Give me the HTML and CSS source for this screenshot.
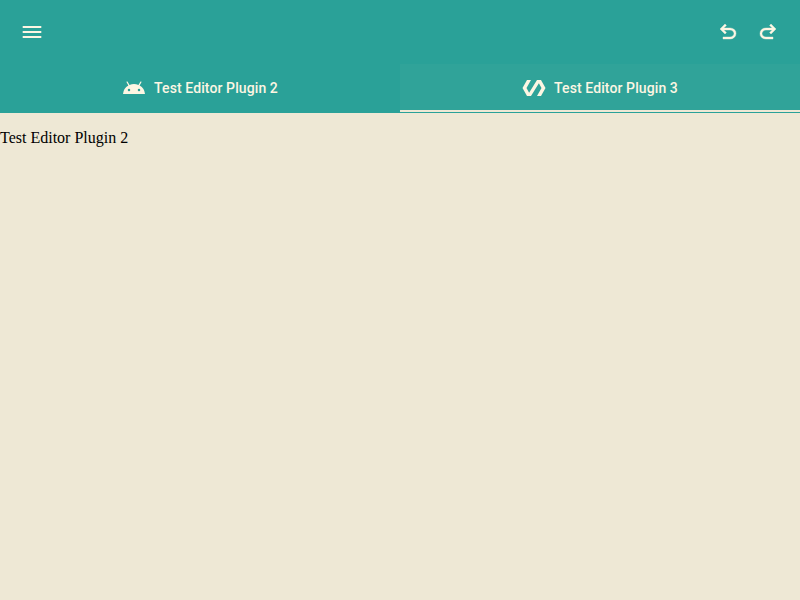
FILE: index.html
```html
<!DOCTYPE html>
<html lang="en">
<head>
<meta charset="utf-8">
<title>Editor</title>
<link rel="stylesheet" href="styles.css">
</head>
<body>
<header class="header">
  <div class="toolbar">
    <button class="icon-button" aria-label="Menu"><svg class="icon" viewBox="0 0 24 24"><path d="M2.700 18h18.600v-2H2.700v2zm0-5h18.600v-2H2.700v2zm0-7v2h18.600V6H2.700z"/></svg></button>
    <div class="actions">
      <button class="icon-button" aria-label="Undo"><svg class="icon icon-bold" viewBox="0 -960 960 960"><path d="M280-200v-80h284q63 0 109.500-40T720-420q0-60-46.500-100T564-560H312l104 104-56 56-200-200 200-200 56 56-104 104h252q97 0 169.500 63T800-420q0 94-72.500 157T564-200H280Z"/></svg></button>
      <button class="icon-button" aria-label="Redo"><svg class="icon icon-bold" viewBox="0 -960 960 960"><path d="M396-200q-97 0-169.500-63T160-420q0-94 66.500-157T396-640h252L544-744l56-56 200 200-200 200-56-56 104-104H396q-63 0-109.500 40T240-420q0 60 46.500 100T396-280h284v80H396Z"/></svg></button>
    </div>
  </div>
  <nav class="tabs">
    <button class="tab"><svg class="icon" viewBox="0 0 24 24"><path d="M17.600 9.480l1.840-3.180c.16-.31.04-.69-.26-.85-.29-.15-.65-.06-.83.22l-1.880 3.240a11.460 11.460 0 0 0-8.940 0L5.650 5.670c-.19-.29-.58-.38-.87-.2-.28.18-.37.54-.22.83L6.400 9.480A10.780 10.780 0 0 0 1 18h22a10.780 10.780 0 0 0-5.400-8.520zM7 15.250a1.250 1.250 0 1 1 0-2.500 1.250 1.250 0 0 1 0 2.500zm10 0a1.250 1.250 0 1 1 0-2.500 1.250 1.250 0 0 1 0 2.500z"/></svg><span>Test Editor Plugin 2</span></button>
    <button class="tab tab-selected"><svg class="icon" viewBox="0 0 24 24"><path d="M19 4h-4L7.110 16.630 4.500 12 9 4H5L.5 12 5 20h4l7.890-12.630L19.500 12 15 20h4l4.500-8z"/></svg><span>Test Editor Plugin 3</span></button>
  </nav>
</header>
<main><p>Test Editor Plugin 2</p></main>
</body>
</html>
```
FILE: styles.css
```css
html, body {
  height: 100%;
}

body {
  margin: 0;
  background: #eee8d5;
  color: #000;
  font-family: "Liberation Serif", serif;
  font-size: 16px;
  overflow: hidden;
}

.header {
  height: 113px;
  background: #2aa198;
  color: #fdf6e3;
}

.toolbar {
  display: flex;
  align-items: center;
  justify-content: space-between;
  height: 64px;
  padding: 0 12px;
  box-sizing: border-box;
}

.actions {
  display: flex;
}

button {
  display: flex;
  align-items: center;
  justify-content: center;
  margin: 0;
  padding: 0;
  border: 0;
  background: none;
  color: inherit;
}

.icon-button {
  width: 40px;
  height: 40px;
}

.icon {
  display: block;
  width: 24px;
  height: 24px;
  fill: currentColor;
}

.icon-bold {
  stroke: currentColor;
  stroke-width: 16;
}

.tabs {
  display: grid;
  grid-template-columns: 1fr 1fr;
  height: 48px;
}

.tab {
  gap: 8px;
  font: 500 14px/20px Roboto, sans-serif;
  letter-spacing: 0.1px;
  color: #fdf6e3;
}

.tab-selected {
  background: #30a399;
  box-shadow: inset 0 -2px #eee8d5;
}

main p {
  margin: 0;
  padding-top: 16px;
}
```
